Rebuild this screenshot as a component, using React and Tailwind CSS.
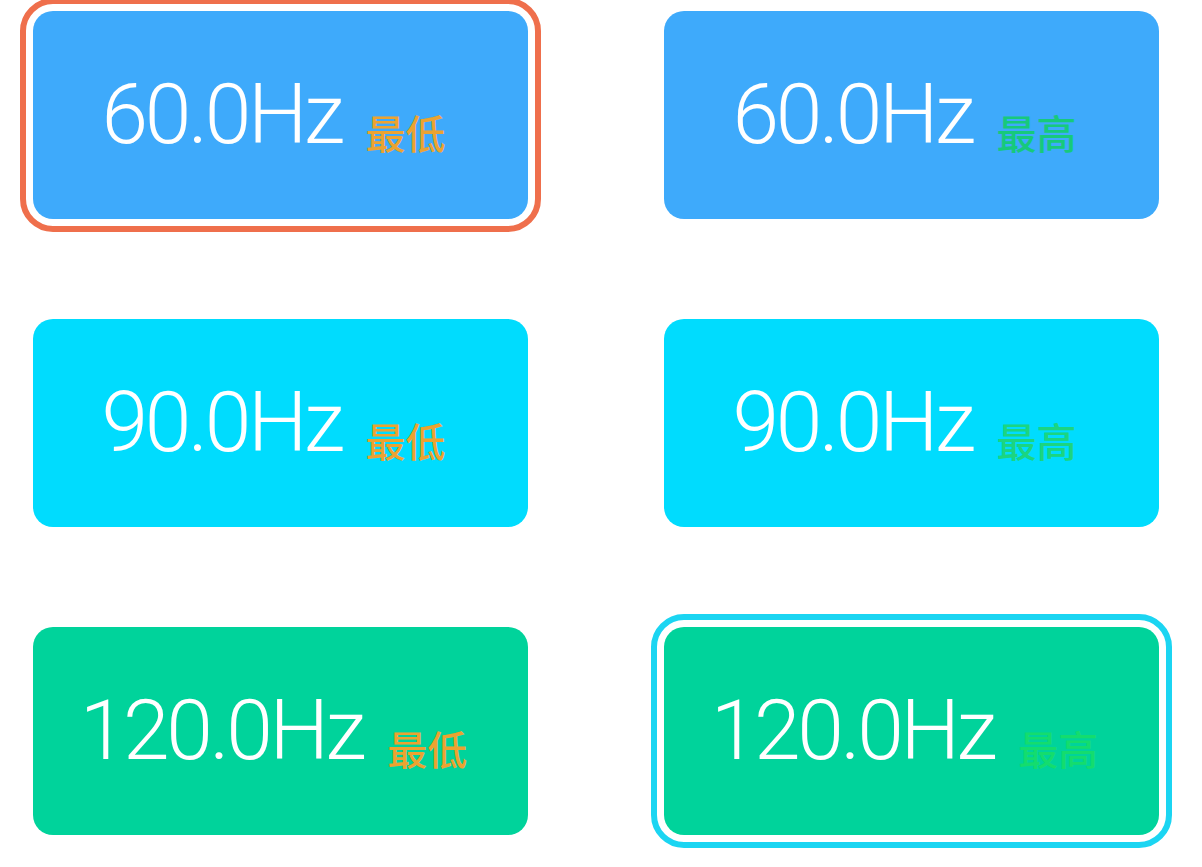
import { useState } from "react";

// Refresh rate presets, one row per rate: min on the left, max on the right
const rates = [
  { hz: "60.0Hz", bg: "bg-[#3eaafb]", maxColor: "text-[#17c97c]" },
  { hz: "90.0Hz", bg: "bg-[#00dcfe]", maxColor: "text-[#1cd580]" },
  { hz: "120.0Hz", bg: "bg-[#00d39b]", maxColor: "text-[#14dc6e]" },
];

function RateCard({ hz, bg, label, labelColor, selected, ringColor }) {
  return (
    <button
      className={`flex h-[208px] w-[495px] items-center justify-center gap-[24px] rounded-[20px] pr-[14px] ${bg} ${
        selected ? `outline-[6px] outline-offset-[7px] outline-solid ${ringColor}` : ""
      }`}
    >
      <span className="font-['Roboto',sans-serif] text-[84px] font-light leading-none tracking-[-0.04em] text-white">
        {hz}
      </span>
      <span
        className={`mt-[34px] font-['Noto_Sans_CJK_SC',sans-serif] text-[40px] font-medium leading-none ${labelColor}`}
      >
        {label}
      </span>
    </button>
  );
}

export default function App() {
  const [minRate] = useState(0);
  const [maxRate] = useState(2);

  return (
    <div className="min-h-screen w-[1202px] bg-white pl-[33px] pt-[11px]">
      <div className="grid grid-cols-[495px_495px] gap-x-[136px] gap-y-[100px]">
        {rates.map((r, idx) => (
          <>
            <RateCard
              key={`min-${idx}`}
              hz={r.hz}
              bg={r.bg}
              label="最低"
              labelColor="text-[#eba331]"
              selected={idx === minRate}
              ringColor="outline-[#ef6f4c]"
            />
            <RateCard
              key={`max-${idx}`}
              hz={r.hz}
              bg={r.bg}
              label="最高"
              labelColor={r.maxColor}
              selected={idx === maxRate}
              ringColor="outline-[#1bd5f2]"
            />
          </>
        ))}
      </div>
    </div>
  );
}
